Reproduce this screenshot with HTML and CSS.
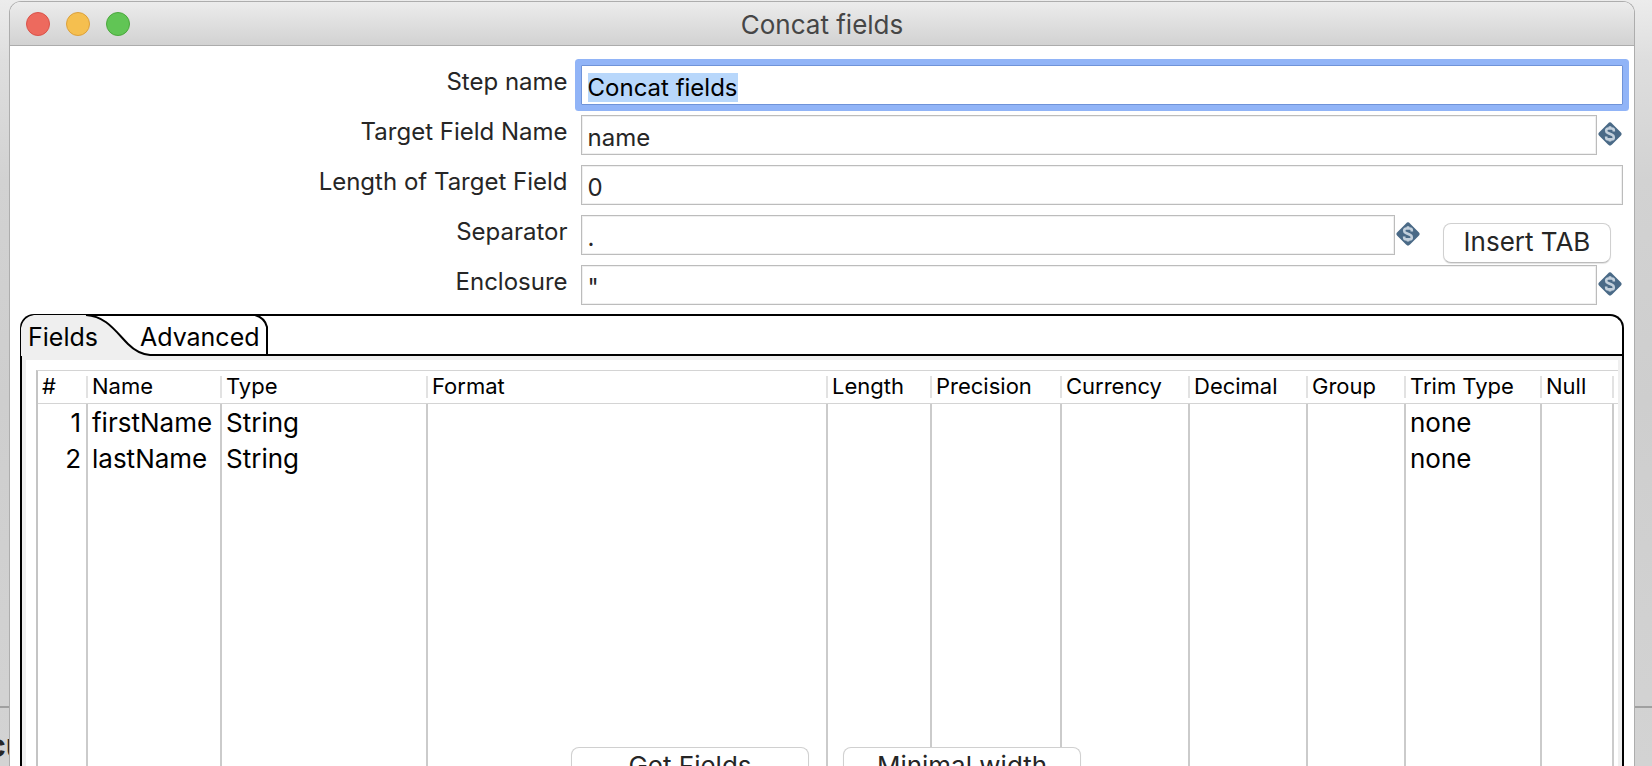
FILE: index.html
```html
<!DOCTYPE html>
<html lang="en">
<head>
<meta charset="utf-8">
<title>Concat fields</title>
<link rel="stylesheet" href="styles.css">
</head>
<body>
<svg class="defs" aria-hidden="true">
  <symbol id="variable" viewBox="0 0 24 24">
    <path d="M10 1.500Q12 -.8 14 1.500L22.500 10Q24.800 12 22.500 14L14 22.500Q12 24.800 10 22.500L1.500 14Q-.8 12 1.500 10Z" fill="#4a6a87"/>
    <path d="M15.800 9.400V8.500Q15.800 6.500 13.600 6.500H10.400Q8.200 6.500 8.200 8.700Q8.200 10.400 10 11L14 12.700Q15.800 13.400 15.800 15.200Q15.800 17.400 13.600 17.400H10.400Q8.200 17.400 8.200 15.400V14.500M12 4.200V6.500M12 17.400V19.600" fill="none" stroke="#c3d0dc" stroke-width="2.600"/>
  </symbol>
</svg>
<div class="backdrop"><span class="backdrop-text">cu</span></div>
<main class="window">
  <header class="titlebar">
    <div class="lights">
      <button class="light close" aria-label="Close"></button>
      <button class="light minimize" aria-label="Minimize"></button>
      <button class="light zoom" aria-label="Zoom"></button>
    </div>
    <h1 class="title">Concat fields</h1>
  </header>
  <form class="form">
    <div class="row">
      <label for="step">Step name</label>
      <div class="control"><input id="step" class="field focused" type="text" value="Concat fields"></div>
    </div>
    <div class="row">
      <label for="target">Target Field Name</label>
      <div class="control"><input id="target" class="field" type="text" value="name"><svg class="var"><use href="#variable"/></svg></div>
    </div>
    <div class="row">
      <label for="length">Length of Target Field</label>
      <div class="control"><input id="length" class="field" type="text" value="0"></div>
    </div>
    <div class="row">
      <label for="separator">Separator</label>
      <div class="control"><input id="separator" class="field" type="text" value="."><svg class="var"><use href="#variable"/></svg><button type="button" class="btn insert">Insert TAB</button></div>
    </div>
    <div class="row">
      <label for="enclosure">Enclosure</label>
      <div class="control"><input id="enclosure" class="field" type="text" value="&quot;"><svg class="var"><use href="#variable"/></svg></div>
    </div>
  </form>
  <section class="folder">
    <div class="tabs" role="tablist">
      <svg class="tab-shape" viewBox="0 0 250 42" aria-hidden="true">
        <path class="tab-fill" d="M1 42V14Q3 3 14 1H66C86 2 96 18 108 30Q118 40 130 41V42Z"/>
        <path class="tab-line" d="M66 1C86 2 96 18 108 30Q118 40 130 41H250M235 1Q245 4 247 13V41"/>
      </svg>
      <button class="tab" role="tab" aria-selected="true">Fields</button>
      <button class="tab advanced" role="tab" aria-selected="false">Advanced</button>
    </div>
    <div class="pane">
      <div class="grid">
        <table>
          <colgroup><col class="c-num"><col class="c-name"><col class="c-type"><col><col class="c-length"><col class="c-precision"><col class="c-currency"><col class="c-decimal"><col class="c-group"><col class="c-trim"><col class="c-null"><col class="c-end"></colgroup>
          <thead>
            <tr><th>#</th><th>Name</th><th>Type</th><th>Format</th><th>Length</th><th>Precision</th><th>Currency</th><th>Decimal</th><th>Group</th><th>Trim Type</th><th class="last">Null</th><td></td></tr>
          </thead>
          <tbody>
            <tr><td class="num">1</td><td>firstName</td><td>String</td><td></td><td></td><td></td><td></td><td></td><td></td><td>none</td><td></td><td></td></tr>
            <tr><td class="num">2</td><td>lastName</td><td>String</td><td></td><td></td><td></td><td></td><td></td><td></td><td>none</td><td></td><td></td></tr>
            <tr class="rest"><td></td><td></td><td></td><td></td><td></td><td></td><td></td><td></td><td></td><td></td><td></td><td></td></tr>
          </tbody>
        </table>
      </div>
      <div class="actions">
        <button type="button" class="btn">Get Fields</button>
        <button type="button" class="btn">Minimal width</button>
      </div>
    </div>
  </section>
</main>
<script src="script.js"></script>
</body>
</html>
```
FILE: styles.css
```css
* { box-sizing: border-box; }
body {
  margin: 0;
  height: 100vh;
  overflow: hidden;
  position: relative;
  font-family: Inter, "Liberation Sans", sans-serif;
  font-size: 24px;
  color: #262626;
  background: linear-gradient(#ececec, #dedede 60px, #d2d2d2 180px, #cecece 400px, #d3d3d3);
}
button, input { font: inherit; color: inherit; margin: 0; }
.defs { position: absolute; width: 0; height: 0; }
.backdrop {
  position: absolute;
  inset: auto 0 0 0;
  height: 60px;
  border-top: 2px solid #a0a0a0;
}
.backdrop-text {
  position: absolute;
  left: -13px;
  top: 18px;
  font-size: 32px;
  line-height: 40px;
  font-weight: 700;
}
.window {
  position: relative;
  height: calc(100vh - 1px);
  margin: 1px 17px 0 9px;
  display: flex;
  flex-direction: column;
  border: 1px solid #adadad;
  border-bottom: 0;
  border-radius: 12px 12px 0 0;
  background: #fff;
  overflow: hidden;
}
.titlebar {
  flex: none;
  height: 44px;
  display: flex;
  align-items: center;
  justify-content: center;
  position: relative;
  background: linear-gradient(#ececec, #d2d2d2);
  border-bottom: 1px solid #acacac;
}
.lights { position: absolute; left: 16px; top: 10px; display: flex; gap: 16px; }
.light { width: 24px; height: 24px; padding: 0; border-radius: 50%; border: 1px solid; }
.close { background: #ed6a5e; border-color: #d9534a; }
.minimize { background: #f5bf4f; border-color: #dba03c; }
.zoom { background: #61c555; border-color: #4ba73d; }
.title { margin: 0; padding-top: 2px; font-size: 26px; line-height: 32px; font-weight: 400; color: #464646; }
.form { flex: none; padding: 19px 11px 9px 0; display: grid; gap: 10px; }
.row { display: grid; grid-template-columns: 35% 1fr; column-gap: 6px; height: 40px; }
.row label { text-align: right; padding-right: 7px; line-height: 34px; white-space: nowrap; }
.control { display: flex; align-items: flex-start; }
.field {
  flex: 1;
  min-width: 0;
  height: 40px;
  padding: 4px 6px 0;
  border: 1px solid #bcbcbc;
  border-radius: 0;
  background: #fff;
  box-shadow: inset 0 0 0 1px #f0f0f0;
  outline: none;
}
.focused { border-color: #6f93d8; box-shadow: 0 0 0 6px #91b4f7; color: #000; border-radius: 1px; }
.field::selection { background: #b8d7fb; color: #000; }
.var { flex: none; width: 24px; height: 24px; margin: 7px 1px 0 1px; }
.btn {
  height: 40px;
  padding: 0 0 2px;
  border: 1px solid #d0d0d0;
  border-bottom-color: #bcbcbc;
  border-radius: 8px;
  background: #fff;
  box-shadow: 0 1px 1px #e4e4e4;
  font-size: 26px;
  line-height: 36px;
}
.insert { width: 168px; margin: 8px 12px 0 22px; }
.folder {
  flex: 1;
  min-height: 0;
  margin: 0 10px;
  display: flex;
  flex-direction: column;
  border: 2px solid #000;
  border-bottom: 0;
  border-radius: 14px 14px 0 0;
}
.tabs {
  flex: none;
  height: 40px;
  position: relative;
  display: flex;
  border-bottom: 2px solid #000;
  color: #000;
}
.tab-shape { position: absolute; left: -2px; top: -2px; width: 250px; height: 42px; }
.tab-fill { fill: #efefef; stroke: none; }
.tab-line { fill: none; stroke: #000; stroke-width: 2; }
.tab { position: relative; padding: 2px 0 0 6px; border: 0; background: none; font-size: 25px; line-height: 38px; }
.advanced { margin-left: 36px; }
.pane {
  flex: 1;
  min-height: 0;
  position: relative;
  border: 4px solid #efefef;
  border-bottom: 0;
  padding: 10px 0 0 10px;
}
.grid { height: 100%; border-left: 2px solid #c4c4c4; border-top: 1px solid #d4d4d4; }
table { width: 100%; height: 100%; table-layout: fixed; border-collapse: separate; border-spacing: 0; color: #000; }
th, td { padding: 0 0 0 4px; text-align: left; white-space: nowrap; }
thead tr { height: 33px; }
th {
  font-size: 22px;
  line-height: 30px;
  padding-bottom: 2px;
  font-weight: 400;
}
thead th, thead td { border-bottom: 1px solid #d4d4d4; }
th { background: linear-gradient(#e2e2e2, #e2e2e2) right 5px / 2px 22px no-repeat; }
tbody td { height: 36px; padding-top: 2px; font-size: 26px; line-height: 34px; border-right: 2px solid #cbcbcb; }
tbody td:last-child { border-right: 0; }
tbody .num { text-align: right; padding-right: 5px; padding-left: 0; }
tbody .rest td { height: auto; }
.c-num { width: 50px; }
.c-name { width: 134px; }
.c-type { width: 206px; }
.c-length { width: 104px; }
.c-precision { width: 130px; }
.c-currency { width: 128px; }
.c-decimal { width: 118px; }
.c-group { width: 98px; }
.c-trim { width: 136px; }
.c-null { width: 72px; }
.c-end { width: 4px; }
th + td, tbody td:last-child { padding: 0; }
.actions {
  position: absolute;
  left: 8px;
  right: 0;
  bottom: -21px;
  display: flex;
  justify-content: center;
  gap: 34px;
}
.actions .btn { width: 238px; }
```
FILE: script.js
```js
const step = document.getElementById("step");
step.focus();
step.select();
```
